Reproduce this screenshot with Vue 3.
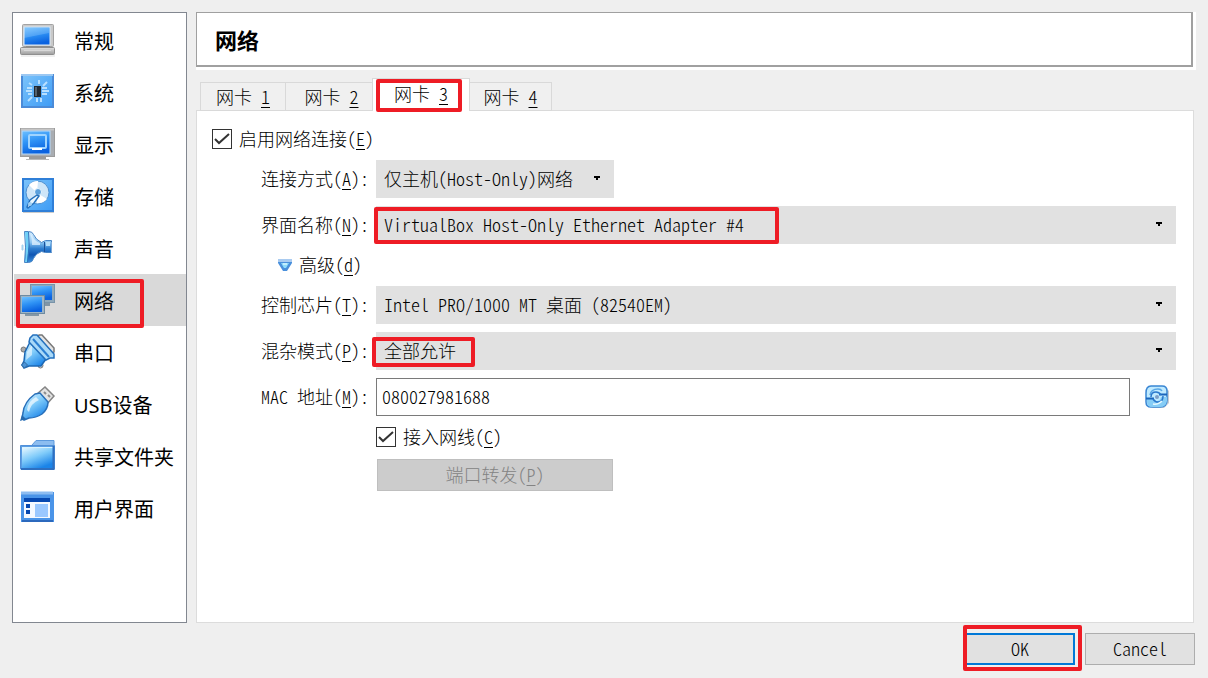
<script setup>
import { ref } from 'vue'

const sections = [
  { id: 'general', label: '常规' },
  { id: 'system', label: '系统' },
  { id: 'display', label: '显示' },
  { id: 'storage', label: '存储' },
  { id: 'audio', label: '声音' },
  { id: 'network', label: '网络' },
  { id: 'serial', label: '串口' },
  { id: 'usb', label: 'USB设备' },
  { id: 'folders', label: '共享文件夹' },
  { id: 'ui', label: '用户界面' }
]
const section = ref('network')
const adapters = [1, 2, 3, 4]
const adapter = ref(3)
const enabled = ref(true)
const cable = ref(true)
const mac = ref('080027981688')
</script>

<template>
  <div class="window">
    <svg class="defs" width="0" height="0" aria-hidden="true">
      <defs>
        <linearGradient id="screen" x1="0" y1="0" x2="0.3" y2="1">
          <stop offset="0" stop-color="#6ec0ff" /><stop offset="0.5" stop-color="#2f93f5" /><stop offset="1" stop-color="#0a62e0" />
        </linearGradient>
        <linearGradient id="sky" x1="0" y1="0" x2="1" y2="1">
          <stop offset="0" stop-color="#7cc4fb" /><stop offset="1" stop-color="#3d9bf5" />
        </linearGradient>
        <linearGradient id="glass" x1="0" y1="0" x2="0.6" y2="1">
          <stop offset="0" stop-color="#e6f7ff" /><stop offset="0.5" stop-color="#7fcbfa" /><stop offset="1" stop-color="#1b84e8" />
        </linearGradient>
        <linearGradient id="horn" x1="0" y1="0" x2="0" y2="1">
          <stop offset="0" stop-color="#d8eeff" /><stop offset="0.35" stop-color="#8cc6f2" /><stop offset="0.55" stop-color="#2f7fd0" /><stop offset="0.75" stop-color="#0f56b4" /><stop offset="1" stop-color="#3a8fdc" />
        </linearGradient>
        <linearGradient id="metal" x1="0" y1="0" x2="0" y2="1">
          <stop offset="0" stop-color="#e2e2e2" /><stop offset="1" stop-color="#9c9c9c" />
        </linearGradient>
      </defs>
    </svg>

    <div class="body">
      <nav class="sidebar">
        <button v-for="s in sections" :key="s.id" type="button" class="item" :class="{ active: s.id === section }" @click="section = s.id">
          <svg class="icon" viewBox="0 0 36 36" aria-hidden="true">
            <template v-if="s.id === 'general'">
              <rect x="2.5" y="2.5" width="31" height="22" rx="1" fill="#c9c9c9" stroke="#a3a3a3" />
              <rect x="4" y="5" width="26" height="18" fill="url(#screen)" stroke="#dce9f5" stroke-width="1" />
              <path d="M4 6h25v5L4 16z" fill="#fff" opacity=".18" />
              <path d="M6 24.500h24" stroke="#8d8d8d" />
              <rect x="0.5" y="25.5" width="34" height="7" rx="1" fill="url(#metal)" stroke="#8f8f8f" />
              <path d="M4 28.5h27" stroke="#d8d8d8" />
              <path d="M1 34h34" stroke="#000" opacity=".12" />
            </template>
            <template v-else-if="s.id === 'system'">
              <rect x="2" y="1" width="31" height="32" fill="url(#sky)" stroke="#4b8bd8" stroke-width="2" />
              <path d="M1 1h32" stroke="#9cc8f2" stroke-width="2" />
              <path d="M7 14h5M6 17h6M8 20h4M22 14h5M22 17h7M22 20h5M19 6v4M17 24v4M21 24v4M27 8l-4 4M8 27l4-4M9 9l3 2" stroke="#b8e0ff" stroke-width="2" fill="none" />
              <rect x="14" y="12" width="7" height="11" fill="#222a33" />
              <path d="M15 13h2v9h-2z" fill="#54616d" />
            </template>
            <template v-else-if="s.id === 'display'">
              <rect x="0.5" y="2.5" width="34" height="28" fill="#a9adb2" stroke="#9b9b9b" />
              <path d="M1 3.5h33" stroke="#c5c5c5" stroke-width="2" />
              <rect x="2" y="5" width="28" height="23" fill="url(#screen)" stroke="#b8dcfb" />
              <rect x="9" y="9" width="17" height="13" rx="1" fill="none" stroke="#9fd4ff" stroke-width="2" />
              <path d="M12 23h10" stroke="#fff" stroke-width="2" />
              <path d="M9 31h17v3H9z" fill="#9b9b9b" /><path d="M6 33.500h23" stroke="#b9b9b9" />
            </template>
            <template v-else-if="s.id === 'storage'">
              <rect x="3" y="1" width="30" height="32" fill="url(#sky)" stroke="#2f7fd8" stroke-width="2" />
              <circle cx="17.500" cy="14.500" r="11.500" fill="#cfe6f8" stroke="#4c8fd0" />
              <path d="M17 15L9 7a11 11 0 0 1 9-4z" fill="#fff" /><path d="M17 15l10 6a11 11 0 0 1-10 4z" fill="#fff" />
              <circle cx="18" cy="14" r="3.500" fill="#5ba0dc" stroke="#e9f6ff" />
              <path d="M7 29l3-7 7-5 2 1-5 7-6 5z" fill="#e8f6ff" stroke="#2571bd" stroke-width="1.500" />
              <circle cx="10" cy="26" r="2" fill="#9fd0f5" />
              <path d="M3 34.500h31" stroke="#000" opacity=".2" />
            </template>
            <template v-else-if="s.id === 'audio'">
              <path d="M3 15h-1v5h1z" fill="#a7d2ee" stroke="#a7d2ee" />
              <path d="M4.500 1.500h4q4 0 5 3 2 5 8 8l4-2h6v12h-6l-4-1q-6 2-8 7-1 4-5 4h-4q2-15 0-31z" fill="url(#horn)" stroke="#4a86c6" />
              <path d="M5 2h3q1 15-1 30H5q2-14 0-30z" fill="#6fd0f6" />
              <path d="M8.500 2q2 15-1 30" fill="none" stroke="#2f74bc" />
              <path d="M10 4q2 3 2 11h8v-2q-6-2-8-8z" fill="#e0f2ff" opacity=".75" />
              <path d="M24.500 12v10" stroke="#1b4f96" />
              <path d="M26 12h4v4h-4z" fill="#b5ddf9" />
              <path d="M31.500 12v10" stroke="#7da9d8" />
            </template>
            <template v-else-if="s.id === 'network'">
              <rect x="10.500" y="2.500" width="24" height="18" fill="#90a9bb" stroke="#7893a8" />
              <rect x="12" y="4" width="20" height="14" fill="url(#screen)" />
              <path d="M21 21h9v3h-9z" fill="#8295a5" />
              <rect x="0.500" y="13.500" width="24" height="18" fill="#9cb4c6" stroke="#6f8ba1" />
              <rect x="2" y="15" width="20" height="15" fill="url(#screen)" />
              <path d="M5 32h14v2H5z" fill="#8497a6" />
            </template>
            <template v-else-if="s.id === 'serial'">
              <path d="M17 4l2-3h3l12 13v4l-3 3" fill="#e4e4e4" stroke="#777" stroke-width="1.500" />
              <circle cx="3.500" cy="15.500" r="2.500" fill="#aaa" stroke="#777" />
              <circle cx="20.500" cy="31.500" r="2.500" fill="#ddd" stroke="#777" />
              <path d="M10 8l-5 10-1 9-2 4 2 3 5-2h12l5-7z" fill="url(#glass)" stroke="#1d68b4" stroke-width="1.500" />
              <path d="M7 18l5-7v10l-6 5z" fill="#fff" opacity=".55" />
              <path d="M10 4l3-3h4l17 19v4h-4l-4 2L9 8z" fill="#a9d9f8" stroke="#2370bd" stroke-width="1.500" />
              <path d="M13 5l16 18" stroke="#2b7fd2" stroke-width="2" />
              <path d="M1.500 31l3-3 3 3-3 3z" fill="#4b94d8" stroke="#346b9f" />
            </template>
            <template v-else-if="s.id === 'usb'">
              <path d="M17 8l8-7 9 9-7 8z" fill="#e3e3e3" stroke="#858585" stroke-width="1.500" />
              <path d="M24 6l2 2M28 9l2 2" stroke="#8d8d8d" stroke-width="2" />
              <path d="M15 8l5-1 8 9q0 7-6 12-6 4-13 4l-5 2-2-2 1-5Q4 16 15 8z" fill="url(#glass)" stroke="#286fb9" stroke-width="1.500" />
              <path d="M7 24q1-9 9-13l3 3Q11 17 9 26z" fill="#fff" opacity=".65" />
              <path d="M0 35l2-6 4 4z" fill="#266aae" />
            </template>
            <template v-else-if="s.id === 'folders'">
              <path d="M12 7l4-4.500h18V10H12z" fill="#8cbdf0" stroke="#5d9add" />
              <path d="M.500 7.500h34V31H.500z" fill="#5a9de4" stroke="#5290d8" />
              <rect x="2" y="10" width="31" height="20" fill="url(#glass)" />
              <path d="M2 9.500h31" stroke="#d8f3ff" /><path d="M33.500 8v23H1" fill="none" stroke="#2e6fc0" stroke-width="2" />
            </template>
            <template v-else>
              <rect x="1" y="2" width="33" height="30" fill="#4a94e8" />
              <path d="M1 3h32" stroke="#8dbcf0" stroke-width="3" />
              <rect x="4" y="8" width="26" height="4" fill="#0648b0" />
              <rect x="4" y="12" width="26" height="16" fill="#f4f9ff" />
              <path d="M6 14h4v4H6zM6 20h4v4H6z" fill="#0648b0" />
              <rect x="15" y="14" width="13" height="13" fill="#9ac8ff" />
              <path d="M2 31h31" stroke="#2c69bd" stroke-width="2" />
            </template>
          </svg>
          <span class="name">{{ s.label }}</span>
          <span v-if="s.id === 'network'" class="mark mark-section"></span>
        </button>
      </nav>

      <main class="content">
        <header class="title-frame"><h1 class="title">网络</h1></header>

        <div class="tabs" role="tablist">
          <button v-for="n in adapters" :key="n" type="button" role="tab" :aria-selected="n === adapter" class="tab" :class="{ selected: n === adapter }" @click="adapter = n">
            网卡 <u>{{ n }}</u>
            <span v-if="n === 3" class="mark mark-tab"></span>
          </button>
        </div>

        <section class="pane">
          <label class="check wide">
            <span class="box"><input v-model="enabled" type="checkbox"><svg v-if="enabled" viewBox="0 0 20 20"><path d="M3 10l4 4 10-9" /></svg></span>
            <span class="caption">启用网络连接(<u>E</u>)</span>
          </label>

          <label class="label" for="attached">连接方式(<u>A</u>):</label>
          <div class="field fit">
            <select id="attached"><option>仅主机(Host-Only)网络</option></select>
            <svg class="arrow" viewBox="0 0 6 4"><path d="M0 0h6v2H4v2H2V2H0z" /></svg>
          </div>

          <label class="label" for="name">界面名称(<u>N</u>):</label>
          <div class="field">
            <select id="name"><option>VirtualBox Host-Only Ethernet Adapter #4</option></select>
            <svg class="arrow" viewBox="0 0 6 4"><path d="M0 0h6v2H4v2H2V2H0z" /></svg>
            <span class="mark mark-name"></span>
          </div>

          <button type="button" class="advanced">
            <svg viewBox="0 0 14 14" aria-hidden="true"><path d="M0 1h14v4l-5 8H5L0 5z" fill="#4a90dc" /><path d="M0 1h14v3H0z" fill="#a9cbf0" /><path d="M3 5h8l-3 5H6z" fill="#8fdcfb" /><path d="M5 5h4v2H5z" fill="#c5effd" /></svg>
            <span class="caption">高级(<u>d</u>)</span>
          </button>

          <label class="label" for="chip">控制芯片(<u>T</u>):</label>
          <div class="field">
            <select id="chip"><option>Intel PRO/1000 MT 桌面 (82540EM)</option></select>
            <svg class="arrow" viewBox="0 0 6 4"><path d="M0 0h6v2H4v2H2V2H0z" /></svg>
          </div>

          <label class="label" for="promisc">混杂模式(<u>P</u>):</label>
          <div class="field">
            <select id="promisc"><option>全部允许</option></select>
            <svg class="arrow" viewBox="0 0 6 4"><path d="M0 0h6v2H4v2H2V2H0z" /></svg>
            <span class="mark mark-promisc"></span>
          </div>

          <label class="label" for="mac">MAC 地址(<u>M</u>):</label>
          <div class="mac">
            <input id="mac" v-model="mac" type="text">
            <button type="button" class="refresh" aria-label="刷新">
              <svg viewBox="0 0 24 24" aria-hidden="true">
                <path d="M7 2h13l4 4v12l-5 5H8l-5-4z" fill="#8e9aa8" opacity=".5" />
                <path d="M6 1h11q5 0 5 5v9q0 7-7 7H6q-5 0-5-5V8q0-7 5-7z" fill="#bfeaff" stroke="#3a86d4" stroke-width="1.500" />
                <path d="M2 13h6q1 3 4 3t4-4h6v4q-1 6-7 6H7q-5 0-5-5z" fill="#86cdf6" />
                <path d="M5 10q1-6 8-6 3 0 4 2" fill="none" stroke="#5aa7e6" stroke-width="1.500" />
                <path d="M1 13.500h8M14 9.500h8" stroke="#1b66bd" stroke-width="2" />
                <path d="M6 12q0-5 5-5 3 0 5 3M18 11q0 6-5 6-3 0-5-3" fill="none" stroke="#2a78cc" stroke-width="1.500" />
                <circle cx="12" cy="12" r="2" fill="#7d9fc8" />
                <path d="M8 19q5 1 9-3" fill="none" stroke="#e4f8ff" stroke-width="1.500" />
              </svg>
            </button>
          </div>

          <label class="check">
            <span class="box"><input v-model="cable" type="checkbox"><svg v-if="cable" viewBox="0 0 20 20"><path d="M3 10l4 4 10-9" /></svg></span>
            <span class="caption">接入网线(<u>C</u>)</span>
          </label>

          <button type="button" class="forward" disabled>端口转发(<u>P</u>)</button>
        </section>
      </main>
    </div>

    <footer class="footer">
      <button type="button" class="push primary">OK<span class="mark mark-ok"></span></button>
      <button type="button" class="push">Cancel</button>
    </footer>
  </div>
</template>

<style>
body {
  background: #efefef;
}
</style>

<style scoped>
.window {
  box-sizing: border-box;
  min-height: 100vh;
  padding: 12px 12px 13px;
  display: flex;
  flex-direction: column;
  gap: 10px;
  background: #efefef;
  color: #000;
  font: 300 18px/26px "Noto Sans CJK SC", sans-serif;
  font-feature-settings: "hwid" 1;
}
.window * {
  box-sizing: border-box;
}
.defs {
  position: absolute;
}
button,
select,
input {
  margin: 0;
  padding: 0;
  border: 0;
  border-radius: 0;
  background: none;
  color: inherit;
  font: inherit;
  font-feature-settings: inherit;
}
u {
  text-decoration-thickness: 1px;
  text-underline-offset: 3px;
}
.body {
  flex: 1;
  display: grid;
  grid-template-columns: 175px minmax(0, 1fr);
  gap: 9px;
}
.sidebar {
  padding: 1px 0 1px 1px;
  border: 1px solid #828790;
  background: #fff;
  display: flex;
  flex-direction: column;
}
.item {
  position: relative;
  height: 52px;
  padding-left: 6px;
  display: flex;
  align-items: center;
  gap: 18px;
  font: 20px/28px "Noto Sans", "Noto Sans CJK SC", sans-serif;
  white-space: nowrap;
}
.item.active {
  background: #d9d9d9;
}
.name {
  padding-top: 3px;
}
.icon {
  width: 36px;
  height: 36px;
  flex: none;
}
.content {
  display: flex;
  flex-direction: column;
}
.title-frame {
  padding: 0 3px 3px 0;
  background: #fff;
}
.title {
  margin: 0;
  height: 55px;
  padding-left: 18px;
  display: flex;
  align-items: center;
  border: solid #a0a0a0;
  border-width: 1px 2px 2px 1px;
  font-size: 22px;
  font-weight: 700;
}
.tabs {
  display: flex;
  align-items: flex-end;
  margin: 8px 0 -1px 4px;
  height: 33px;
}
.tab {
  position: relative;
  width: 82px;
  height: 29px;
  padding-bottom: 4px;
  border: 1px solid #d9d9d9;
  border-left: 0;
  background: #f0f0f0;
  white-space: nowrap;
}
.tab:first-child {
  width: 86px;
  border-left: 1px solid #d9d9d9;
}
.tab:nth-child(2) {
  width: 92px;
}
.tab.selected {
  width: 98px;
  height: 33px;
  margin-left: -6px;
  border-left: 1px solid #d9d9d9;
  border-bottom: 0;
  background: #fff;
  z-index: 1;
}
.pane {
  flex: 1;
  margin-right: 2px;
  padding: 15px 17px 15px 15px;
  border: 1px solid #dcdcdc;
  background: #fff;
  display: grid;
  grid-template-columns: 157px minmax(0, 1fr);
  align-content: start;
  align-items: center;
  gap: 8px 7px;
}
.label {
  padding-bottom: 3px;
  text-align: right;
  white-space: nowrap;
}
.caption {
  padding-bottom: 3px;
}
.check {
  grid-column: 2;
  justify-self: start;
  height: 26px;
  display: flex;
  align-items: center;
  gap: 7px;
}
.check.wide {
  grid-column: 1 / -1;
}
.box {
  position: relative;
  width: 20px;
  height: 20px;
}
.box input {
  appearance: none;
  display: block;
  width: 20px;
  height: 20px;
  border: 1px solid #333;
  background: #fff;
}
.box svg {
  position: absolute;
  inset: 0;
  fill: none;
  stroke: #333;
  stroke-width: 2;
  pointer-events: none;
}
.field {
  position: relative;
  height: 38px;
}
.fit {
  width: 238px;
}
.field select {
  appearance: none;
  width: 100%;
  height: 38px;
  padding: 0 24px 3px 8px;
  background: #e1e1e1;
}
.arrow {
  position: absolute;
  right: 14px;
  top: 16px;
  width: 6px;
  height: 4px;
  pointer-events: none;
}
.advanced {
  grid-column: 1 / -1;
  justify-self: start;
  height: 26px;
  margin-left: 66px;
  display: flex;
  align-items: center;
  gap: 7px;
}
.advanced svg {
  width: 14px;
  height: 14px;
}
.mac {
  display: flex;
  gap: 8px;
}
.mac input {
  flex: 1;
  min-width: 0;
  height: 38px;
  padding: 0 5px 3px;
  border: 1px solid #7a7a7a;
  background: #fff;
}
.refresh {
  width: 38px;
  height: 38px;
  display: grid;
  place-items: center;
}
.refresh svg {
  width: 24px;
  height: 24px;
}
.forward {
  grid-column: 2;
  width: 236px;
  height: 32px;
  margin: 1px;
  padding-bottom: 3px;
  border: 1px solid #bfbfbf;
  background: #ccc;
  color: #838383;
}
.footer {
  display: flex;
  justify-content: flex-end;
  gap: 10px;
  padding-right: 1px;
}
.push {
  position: relative;
  width: 110px;
  height: 32px;
  padding-bottom: 3px;
  border: 1px solid #adadad;
  background: #e1e1e1;
}
.push.primary {
  border: 2px solid #0078d7;
}
.mark {
  position: absolute;
  border: 4px solid #ee1c25;
  border-radius: 2px;
  pointer-events: none;
}
.mark-section {
  left: 2px;
  top: 5px;
  width: 128px;
  height: 49px;
  z-index: 1;
}
.mark-tab {
  left: 3px;
  top: 0;
  width: 86px;
  height: 33px;
}
.mark-name {
  left: -2px;
  top: 1px;
  width: 405px;
  height: 37px;
}
.mark-promisc {
  left: -4px;
  top: 5px;
  width: 103px;
  height: 30px;
}
.mark-ok {
  left: -4px;
  top: -10px;
  width: 119px;
  height: 46px;
}
</style>
